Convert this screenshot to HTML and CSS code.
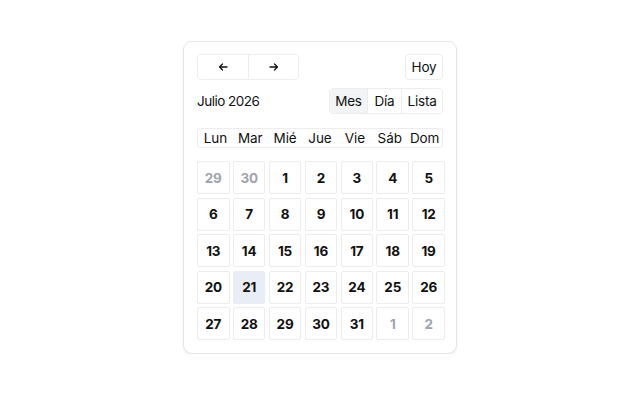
FILE: index.html
```html
<!DOCTYPE html>
<html lang="es">
<head>
<meta charset="utf-8">
<link rel="stylesheet" href="styles.css">
</head>
<body>
<div class="card">
  <div class="toolbar">
    <div class="btn-group">
      <button class="btn nav-btn" aria-label="Anterior">
        <svg width="10" height="10" viewBox="0 0 10 10"><path d="M9 5H1.5M4.5 2L1.5 5l3 3" fill="none" stroke="#111" stroke-width="1.3" stroke-linecap="round" stroke-linejoin="round"/></svg>
      </button>
      <button class="btn nav-btn" aria-label="Siguiente">
        <svg width="10" height="10" viewBox="0 0 10 10"><path d="M1 5h7.5M5.5 2l3 3-3 3" fill="none" stroke="#111" stroke-width="1.3" stroke-linecap="round" stroke-linejoin="round"/></svg>
      </button>
    </div>
    <button class="btn single">Hoy</button>
  </div>
  <div class="toolbar second">
    <div class="title">Julio 2026</div>
    <div class="btn-group">
      <button class="btn view v-mes active">Mes</button>
      <button class="btn view v-dia">Día</button>
      <button class="btn view v-lista">Lista</button>
    </div>
  </div>
  <div class="weekdays">
    <span>Lun</span><span>Mar</span><span>Mié</span><span>Jue</span><span>Vie</span><span>Sáb</span><span>Dom</span>
  </div>
  <div class="days">
    <div class="day muted">29</div><div class="day muted">30</div><div class="day">1</div><div class="day">2</div><div class="day">3</div><div class="day">4</div><div class="day">5</div>
    <div class="day">6</div><div class="day">7</div><div class="day">8</div><div class="day">9</div><div class="day">10</div><div class="day">11</div><div class="day">12</div>
    <div class="day">13</div><div class="day">14</div><div class="day">15</div><div class="day">16</div><div class="day">17</div><div class="day">18</div><div class="day">19</div>
    <div class="day">20</div><div class="day today">21</div><div class="day">22</div><div class="day">23</div><div class="day">24</div><div class="day">25</div><div class="day">26</div>
    <div class="day">27</div><div class="day">28</div><div class="day">29</div><div class="day">30</div><div class="day">31</div><div class="day muted">1</div><div class="day muted">2</div>
  </div>
</div>
</body>
</html>
```
FILE: styles.css
```css
* { box-sizing: border-box; }
html, body { margin: 0; padding: 0; background: #fff; }
body {
  font-family: "Inter", "Liberation Sans", sans-serif;
  color: #111;
  padding-top: 41px;
  padding-left: 183px;
}
.card {
  width: 274px;
  height: 313px;
  border: 1px solid #e6e7ea;
  border-radius: 9px;
  box-shadow: 0 1px 3px rgba(0,0,0,0.08);
  padding: 12px 13px 13px 13px;
  background: #fff;
}
.toolbar {
  display: flex;
  justify-content: space-between;
  align-items: center;
  height: 26px;
}
.toolbar.second { margin-top: 8px; }
.btn-group {
  display: flex;
  border: 1px solid #ececee;
  border-radius: 4px;
  height: 26px;
  overflow: hidden;
}
.btn {
  font: inherit;
  font-size: 13.5px;
  letter-spacing: -0.2px;
  color: #111;
  background: #fff;
  border: none;
  padding: 0;
  margin: 0;
  display: flex;
  align-items: center;
  justify-content: center;
}
.nav-btn { width: 50px; height: 24px; }
.nav-btn + .nav-btn { border-left: 1px solid #ececee; }
.single {
  width: 38px;
  height: 26px;
  border: 1px solid #ececee;
  border-radius: 4px;
}
.view { height: 24px; }
.view + .view { border-left: 1px solid #ececee; }
.v-mes { width: 37px; }
.v-dia { width: 34px; }
.v-lista { width: 41px; }
.view.active { background: #f3f4f6; }
.title { font-size: 13.5px; letter-spacing: -0.5px; }
.weekdays {
  margin-top: 14px;
  height: 20px;
  width: 246px;
  border: 1px solid #ececee;
  border-radius: 3px;
  display: grid;
  grid-template-columns: repeat(7, 1fr);
  align-items: center;
  font-size: 13.5px;
  letter-spacing: -0.1px;
  text-align: center;
}
.days {
  margin-top: 13px;
  display: grid;
  grid-template-columns: repeat(7, 32.5px);
  grid-auto-rows: 33px;
  column-gap: 3.4px;
  row-gap: 3.5px;
}
.day {
  border: 1px solid #ececee;
  border-radius: 2px;
  display: flex;
  align-items: center;
  justify-content: center;
  font-weight: 700;
  font-size: 13.5px;
  letter-spacing: -0.2px;
}
.day.muted { color: #a0a3b0; }
.day.today { background: #e9edf5; border-color: #e9edf5; }
```
